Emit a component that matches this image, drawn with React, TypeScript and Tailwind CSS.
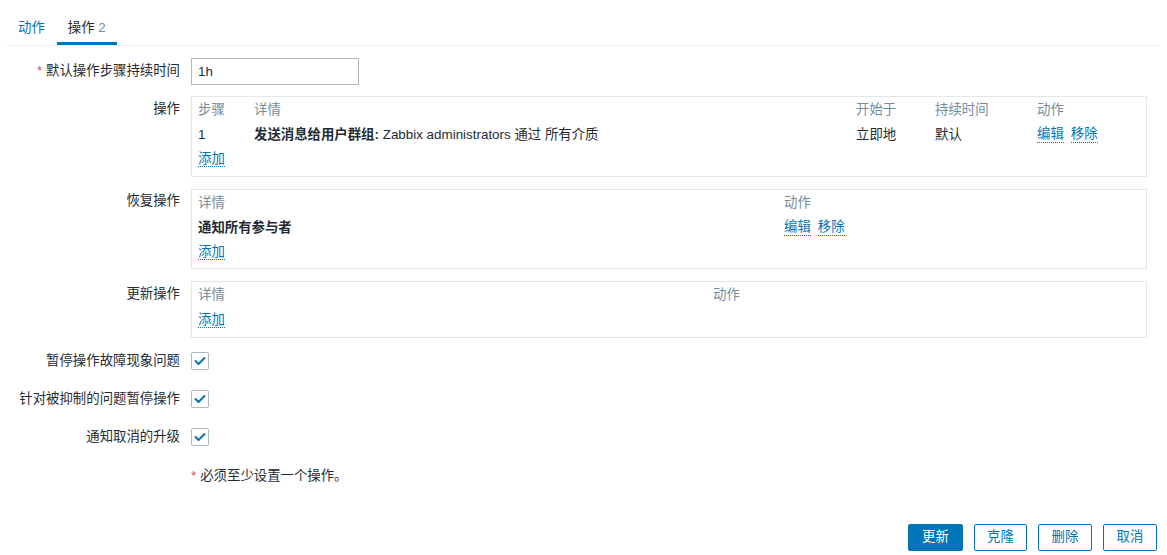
const font = { fontFamily: '"Liberation Sans", Arial, "Noto Sans CJK SC", sans-serif' };

function Link({ children }: { children: React.ReactNode }) {
  return (
    <span className="text-[#0275b8] border-b border-dotted border-[#0275b8] leading-[16px] cursor-pointer">
      {children}
    </span>
  );
}

function Check() {
  return (
    <div className="w-[18px] h-[18px] border border-[#acbbc2] rounded-[2px] bg-white flex items-center justify-center">
      <svg width="12" height="10" viewBox="0 0 12 10" fill="none">
        <polyline points="1.5,5 4.5,8 10.5,2" stroke="#0275b8" strokeWidth="2" strokeLinecap="round" strokeLinejoin="round" />
      </svg>
    </div>
  );
}

function Row({ label, required, children, className = '' }: { label: string; required?: boolean; children: React.ReactNode; className?: string }) {
  return (
    <div className={`flex ${className}`}>
      <div className="w-[180px] shrink-0 text-right whitespace-nowrap">
        {required && <span className="text-[#d64e4e] mr-[4px]">*</span>}
        {label}
      </div>
      <div className="ml-[11px]">{children}</div>
    </div>
  );
}

export default function App() {
  return (
    <div className="w-[1167px] h-[555px] bg-white text-[13.4px] text-[#1f2c33] relative overflow-hidden" style={font}>
      {/* tabs */}
      <div className="mx-[6px] w-[1153px] flex border-b border-[#ebeef0] h-[46px]">
        <div className="px-[12px] pt-[20px] pb-[6px] leading-[16px] border-b-[3px] border-transparent text-[#0275b8]">动作</div>
        <div className="px-[11px] pt-[20px] pb-[6px] leading-[16px] border-b-[3px] border-[#0275b8]">
          操作 <span className="text-[#768d99]">2</span>
        </div>
      </div>

      {/* default step duration */}
      <Row label="默认操作步骤持续时间" required className="mt-[12px] items-center">
        <input
          defaultValue="1h"
          className="w-[168px] h-[27px] border border-[#acbbc2] px-[6px] text-[13.4px] text-[#1f2c33] outline-none"
          style={font}
        />
      </Row>

      {/* operations */}
      <Row label="操作" className="mt-[11px] leading-[26px]">
        <div className="w-[956px] h-[81px] border border-[#e3e7e9] px-[6px]">
          <div className="grid grid-cols-[56px_602px_79px_102px_1fr] leading-[25px] items-center">
            <div className="text-[#768d99]">步骤</div>
            <div className="text-[#768d99]">详情</div>
            <div className="text-[#768d99]">开始于</div>
            <div className="text-[#768d99]">持续时间</div>
            <div className="text-[#768d99]">动作</div>
            <div>1</div>
            <div>
              <b>发送消息给用户群组:</b> Zabbix administrators 通过 所有介质
            </div>
            <div>立即地</div>
            <div>默认</div>
            <div className="flex gap-[7px] items-center">
              <Link>编辑</Link>
              <Link>移除</Link>
            </div>
          </div>
          <div className="leading-[24px]">
            <Link>添加</Link>
          </div>
        </div>
      </Row>

      {/* recovery */}
      <Row label="恢复操作" className="mt-[12px] leading-[24px]">
        <div className="w-[956px] h-[80px] border border-[#e3e7e9] px-[6px]">
          <div className="grid grid-cols-[586px_1fr] leading-[25px] items-center">
            <div className="text-[#768d99]">详情</div>
            <div className="text-[#768d99]">动作</div>
            <div className="font-bold">通知所有参与者</div>
            <div className="flex gap-[7px] items-center">
              <Link>编辑</Link>
              <Link>移除</Link>
            </div>
          </div>
          <div className="leading-[24px]">
            <Link>添加</Link>
          </div>
        </div>
      </Row>

      {/* update */}
      <Row label="更新操作" className="mt-[12px] leading-[26px]">
        <div className="w-[956px] h-[57px] border border-[#e3e7e9] px-[6px]">
          <div className="grid grid-cols-[515px_1fr] leading-[26px]">
            <div className="text-[#768d99]">详情</div>
            <div className="text-[#768d99]">动作</div>
          </div>
          <div className="leading-[24px]">
            <Link>添加</Link>
          </div>
        </div>
      </Row>

      <Row label="暂停操作故障现象问题" className="mt-[4px] h-[38px] items-center">
        <Check />
      </Row>
      <Row label="针对被抑制的问题暂停操作" className="h-[38px] items-center">
        <Check />
      </Row>
      <Row label="通知取消的升级" className="h-[38px] items-center">
        <Check />
      </Row>

      <div className="h-[40px] flex items-center pl-[191px]">
        <span className="text-[#d64e4e] mr-[4px]">*</span>必须至少设置一个操作。
      </div>

      <div className="mt-[28px] flex justify-end gap-[11px] pr-[10px]">
        <button className="w-[55px] h-[27px] rounded-[2px] bg-[#0275b8] text-white border border-[#0275b8]">更新</button>
        <button className="w-[53px] h-[27px] rounded-[2px] bg-white text-[#0275b8] border border-[#0275b8]">克隆</button>
        <button className="w-[54px] h-[27px] rounded-[2px] bg-white text-[#0275b8] border border-[#0275b8]">删除</button>
        <button className="w-[54px] h-[27px] rounded-[2px] bg-white text-[#0275b8] border border-[#0275b8]">取消</button>
      </div>
    </div>
  );
}
